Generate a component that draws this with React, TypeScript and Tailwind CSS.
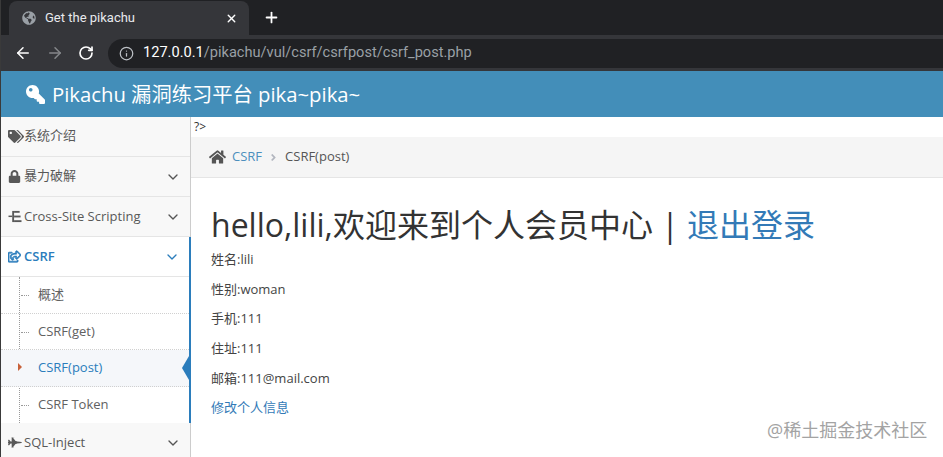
import { ChevronDown, ArrowLeft, ArrowRight, RotateCw, Info, X, Plus } from "lucide-react";
import { FaGlobeAmericas, FaKey, FaTags, FaLock, FaRegShareSquare, FaHome, FaFighterJet, FaAngleRight } from "react-icons/fa";

const FONT = "font-['Open_Sans','Noto_Sans_CJK_SC',sans-serif]";

function TreeIcon() {
  return (
    <svg viewBox="0 0 14 14" className="h-[13px] w-[14px] shrink-0 fill-[#585858]">
      <rect x="0" y="6" width="4" height="1.6" />
      <rect x="4" y="1" width="2" height="12" />
      <rect x="6" y="1" width="6" height="2" />
      <rect x="6" y="6" width="7" height="2" />
      <rect x="6" y="11" width="8" height="2" />
    </svg>
  );
}

function TopItem({ icon, label, chevron = true, active = false, cjk = false }: { icon: React.ReactNode; label: string; chevron?: boolean; active?: boolean; cjk?: boolean }) {
  return (
    <div
      className={
        "flex h-10 items-center border-b border-[#e5e5e5] pl-[7px] pr-[9px] text-[13px] " +
        (active ? "bg-white font-semibold text-[#2b7dbc]" : "bg-[#f8f8f8] text-[#585858]")
      }
    >
      <span className="flex w-4 shrink-0 items-center">{icon}</span>
      <span className={"flex-1 " + (cjk ? "pb-[2px]" : "")}>{label}</span>
      {chevron && <ChevronDown className={"h-4 w-4 " + (active ? "text-[#2b7dbc]" : "text-[#555]")} strokeWidth={2} />}
    </div>
  );
}

function SubItem({ label, active = false, last = false }: { label: string; active?: boolean; last?: boolean }) {
  return (
    <div
      className={
        "relative flex h-[36.5px] items-center pl-[37px] text-[13px] " +
        (last ? "" : "border-b border-dotted border-[#d0d0d0] ") +
        (active ? "bg-[#f5f7fa] text-[#2b7dbc]" : "text-[#616161]")
      }
    >
      {active ? (
        <span className="absolute left-[17px] top-[13px] h-0 w-0 border-y-[4px] border-l-[4px] border-y-transparent border-l-[#c86139]" />
      ) : (
        <span className="absolute left-[20px] top-[18px] w-[8px] border-t border-dotted border-[#999]" />
      )}
      {label}
      {active && (
        <span className="absolute right-0 top-[6px] h-0 w-0 border-y-[12px] border-r-[7px] border-y-transparent border-r-[#2b7dbc]" />
      )}
    </div>
  );
}

export default function App() {
  return (
    <div className={"relative flex h-[457px] w-[943px] flex-col overflow-hidden border-l border-[#3a3a3a] bg-white " + FONT}>
      {/* browser tabs */}
      <div className="flex h-[35px] shrink-0 items-end bg-[#202124] pl-[8px]">
        <div className="flex h-[34px] w-[240px] items-center rounded-t-lg bg-[#35363a] pl-[13px] pr-[11px] text-[13px] text-[#e8eaed]">
          <FaGlobeAmericas className="mr-[9px] h-[14px] w-[14px] text-[#9aa0a6]" />
          <span className="flex-1 font-['Roboto',sans-serif]">Get the pikachu</span>
          <X className="h-[13px] w-[13px] text-white" strokeWidth={2.5} />
        </div>
        <Plus className="mb-[9px] ml-[14px] h-[17px] w-[17px] text-white" strokeWidth={2.5} />
      </div>
      {/* toolbar */}
      <div className="flex h-[36px] shrink-0 items-center bg-[#35363a] pl-[13px]">
        <ArrowLeft className="h-[18px] w-[18px] text-white" strokeWidth={2} />
        <ArrowRight className="ml-[14px] h-[18px] w-[18px] text-[#85878a]" strokeWidth={2} />
        <RotateCw className="ml-[14px] h-[16px] w-[16px] text-white" strokeWidth={2.5} />
        <div className="ml-[14px] flex h-[29px] flex-1 items-center rounded-l-full bg-[#202124] pl-[11px] font-['Roboto',sans-serif] text-[14.6px]">
          <Info className="mr-[9px] h-[15px] w-[15px] text-[#bdc1c6]" strokeWidth={2} />
          <span className="text-white">127.0.0.1</span>
          <span className="text-[#9aa0a6]">/pikachu/vul/csrf/csrfpost/csrf_post.php</span>
        </div>
      </div>
      {/* navbar */}
      <div className="flex h-[46px] shrink-0 items-center bg-[#438eb9] pl-[25px] text-[20.3px] text-white">
        <FaKey className="mr-[7px] h-[19px] w-[19px] -scale-x-100" />
        Pikachu 漏洞练习平台 pika~pika~
      </div>
      <div className="flex min-h-0 flex-1">
        {/* sidebar */}
        <div className="w-[190px] shrink-0 border-r border-[#ccc] bg-[#f2f2f2]">
          <TopItem icon={<FaTags className="h-[15px] w-[16px] text-[#585858]" />} label="系统介绍" chevron={false} cjk />
          <TopItem icon={<FaLock className="h-[13px] w-[13px] text-[#585858]" />} label="暴力破解" cjk />
          <TopItem icon={<TreeIcon />} label="Cross-Site Scripting" />
          <div className="-mr-px border-r-2 border-[#2b7dbc] bg-white">
            <TopItem icon={<FaRegShareSquare className="h-[13px] w-[13px] text-[#2b7dbc]" stroke="currentColor" strokeWidth={30} />} label="CSRF" active />
            <div className="relative">
              <span className="absolute bottom-0 left-[18px] top-0 border-l border-dotted border-[#999]" />
              <SubItem label="概述" />
              <SubItem label="CSRF(get)" />
              <SubItem label="CSRF(post)" active />
              <SubItem label="CSRF Token" last />
            </div>
          </div>
          <TopItem icon={<FaFighterJet className="h-[13px] w-[14px] text-[#585858]" />} label="SQL-Inject" />
        </div>
        {/* content */}
        <div className="min-w-0 flex-1 bg-white">
          <div className="h-5 pl-[3px] text-xs leading-[20px] text-[#333]">?&gt;</div>
          <div className="flex h-[41px] items-center border-b border-[#e5e5e5] bg-[#f5f5f5] pl-[18px] text-[13px] text-[#555]">
            <FaHome className="mr-[6px] h-[16px] w-[17px] text-[#555]" />
            <span className="text-[#4c8fbd]">CSRF</span>
            <FaAngleRight className="mx-[6px] h-[11px] w-[11px] text-[#b2b6bf]" />
            CSRF(post)
          </div>
          <div className="pl-5">
            <h1 className="mt-[27px] text-[32px] leading-[40px] font-normal text-[#333]">
              hello,lili,欢迎来到个人会员中心 | <span className="text-[#337ab7]">退出登录</span>
            </h1>
            <div className="mt-[5px] flex flex-col gap-[11.7px] text-[13px] leading-[18px] text-[#444]">
              <p>姓名:lili</p>
              <p>性别:woman</p>
              <p>手机:111</p>
              <p>住址:111</p>
              <p>邮箱:111@mail.com</p>
              <p className="text-[#337ab7]">修改个人信息</p>
            </div>
          </div>
        </div>
      </div>
      <div className="absolute left-[766px] top-[417px] text-[18px] text-[#a3a3a3]">@稀土掘金技术社区</div>
    </div>
  );
}
